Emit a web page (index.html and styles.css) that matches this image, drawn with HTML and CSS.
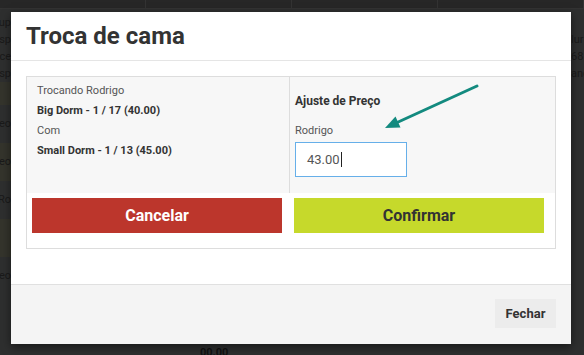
FILE: index.html
```html
<!DOCTYPE html>
<html>
<head>
<meta charset="utf-8">
<link rel="stylesheet" href="styles.css">
</head>
<body>
<div class="backdrop">
  <div class="topbar"><span></span><span></span><span></span><span></span></div>
  <div class="strips">
    <div class="strip strip-left">
      <div class="bg-row">cup</div>
      <div class="bg-row">ósp</div>
      <div class="bg-row">ece</div>
      <div class="bg-row">ósp</div>
      <div class="bg-row band"></div>
      <div class="bg-row tall">Leo</div>
      <div class="bg-row tall band">Leo</div>
      <div class="bg-row tall">Ro</div>
      <div class="bg-row tall band"></div>
      <div class="bg-row tall">Leo</div>
    </div>
    <div class="strip strip-right">
      <div class="bg-row"></div>
      <div class="bg-row">lur</div>
      <div class="bg-row">68</div>
      <div class="bg-row">and</div>
    </div>
  </div>
  <div class="bg-bottom">00.00</div>
</div>

<div class="modal">
  <div class="modal-header">
    <h1 class="modal-title">Troca de cama</h1>
  </div>
  <div class="modal-body">
    <div class="swap-box">
      <div class="swap-info">
        <div class="cell-left">
          <div class="line">Trocando Rodrigo</div>
          <div class="line strong">Big Dorm - 1 / 17 (40.00)</div>
          <div class="line">Com</div>
          <div class="line strong">Small Dorm - 1 / 13 (45.00)</div>
        </div>
        <div class="cell-right">
          <div class="line price-title">Ajuste de Preço</div>
          <div class="line">Rodrigo</div>
          <div class="price-input">43.00<span class="caret"></span></div>
        </div>
      </div>
      <div class="swap-actions">
        <div class="act-left"><button class="btn btn-cancel">Cancelar</button></div>
        <div class="act-right"><button class="btn btn-confirm">Confirmar</button></div>
      </div>
    </div>
  </div>
  <div class="modal-footer">
    <button class="btn-close">Fechar</button>
  </div>
</div>

<svg class="arrow" width="584" height="355" viewBox="0 0 584 355">
  <line x1="477" y1="86" x2="396" y2="123" stroke="#138a7f" stroke-width="3" stroke-linecap="round"/>
  <polygon points="385,128 395.5,116.5 400.5,127.5" fill="#138a7f"/>
</svg>
</body>
</html>
```

FILE: styles.css
```css
* { box-sizing: border-box; }
html, body { margin: 0; padding: 0; }
body {
  width: 584px;
  height: 355px;
  overflow: hidden;
  background: #2e2f2f;
  font-family: Roboto, "Liberation Sans", sans-serif;
  position: relative;
}

.backdrop { position: absolute; inset: 0; }
.topbar {
  height: 9px;
  background: #272727;
  display: flex;
  border-bottom: 1px solid #333;
}
.topbar span { flex: 1; border-right: 1px solid #333; }
.strips { display: flex; justify-content: space-between; padding-top: 5px; }
.strip { overflow: hidden; display: flex; flex-direction: column; }
.strip-left { width: 11px; }
.strip-right { width: 13px; }
.strip-left .bg-row { justify-content: flex-end; }
.bg-row {
  height: 17px;
  font-size: 11px;
  line-height: 17px;
  color: #1a1a1a;
  display: flex;
  white-space: nowrap;
}
.bg-row.tall { height: 38px; line-height: 38px; }
.bg-row.band { background: #34342c; height: 23px; }
.bg-row.tall.band { height: 38px; }
.bg-bottom {
  position: absolute;
  left: 200px;
  top: 347px;
  font-size: 11px;
  line-height: 12px;
  font-weight: bold;
  color: #111;
}

.modal {
  position: absolute;
  left: 11px;
  top: 12px;
  width: 560px;
  background: #fff;
  box-shadow: 0 3px 9px rgba(0,0,0,0.5);
}
.modal-header {
  height: 49px;
  padding: 0 15px;
  border-bottom: 1px solid #e5e5e5;
  display: flex;
  align-items: center;
}
.modal-title {
  margin: 0;
  font-size: 24px;
  font-weight: 700;
  color: #333;
  line-height: 1;
}
.modal-body { padding: 15px 15px 35px; }
.swap-box { border: 1px solid #ddd; }
.swap-info {
  display: grid;
  grid-template-columns: 263px 1fr;
  background: #f7f7f7;
  height: 116px;
}
.cell-left {
  border-right: 1px solid #ddd;
  padding: 4px 10px 0;
}
.cell-right { padding: 14px 5px 0; }
.line {
  font-size: 11px;
  line-height: 20px;
  color: #555;
}
.line.strong { font-weight: 700; color: #333; }
.line.price-title {
  font-size: 12px;
  font-weight: 700;
  color: #333;
  margin-bottom: 10px;
}
.price-input {
  margin-top: 1px;
  width: 112px;
  height: 35px;
  border: 1px solid #66afe9;
  background: #fff;
  font-size: 13px;
  color: #555;
  padding: 0 11px;
  display: flex;
  align-items: center;
}
.caret {
  display: inline-block;
  width: 1px;
  height: 15px;
  background: #222;
  margin-left: 1px;
}
.swap-actions {
  display: grid;
  grid-template-columns: 263px 1fr;
  padding: 5px 0 15px;
}
.act-left { padding-left: 5px; }
.act-right { padding-left: 4px; }
.btn {
  width: 250px;
  height: 35px;
  border: 0;
  font-family: Roboto, "Liberation Sans", sans-serif;
  font-size: 16px;
  font-weight: 700;
  display: block;
  padding: 0;
}
.btn-cancel { background: #bc362c; color: #fff; }
.btn-confirm { background: #c6d92b; color: #333; }

.modal-footer {
  border-top: 1px solid #e0e0e0;
  background: #f4f4f4;
  height: 60px;
  padding: 14px 15px 0;
  display: flex;
  justify-content: flex-end;
  align-items: flex-start;
}
.btn-close {
  width: 61px;
  height: 29px;
  border: 0;
  background: #ececec;
  color: #333;
  font-family: Roboto, "Liberation Sans", sans-serif;
  font-size: 13px;
  font-weight: 700;
  padding: 0;
}

.arrow { position: absolute; left: 0; top: 0; }
```
